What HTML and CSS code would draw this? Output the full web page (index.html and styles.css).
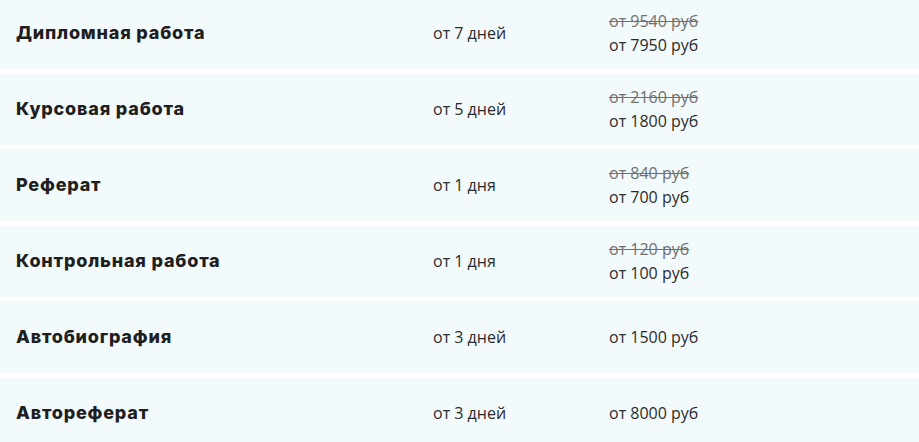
FILE: index.html
```html
<!DOCTYPE html>
<html lang="ru">
<head>
<meta charset="utf-8">
<link rel="stylesheet" href="styles.css">
</head>
<body>
<div class="table">
  <div class="row">
    <div class="name">Дипломная работа</div>
    <div class="term">от 7 дней</div>
    <div class="price"><span class="old">от 9540 руб</span><span>от 7950 руб</span></div>
  </div>
  <div class="row">
    <div class="name">Курсовая работа</div>
    <div class="term">от 5 дней</div>
    <div class="price"><span class="old">от 2160 руб</span><span>от 1800 руб</span></div>
  </div>
  <div class="row">
    <div class="name">Реферат</div>
    <div class="term">от 1 дня</div>
    <div class="price"><span class="old">от 840 руб</span><span>от 700 руб</span></div>
  </div>
  <div class="row">
    <div class="name">Контрольная работа</div>
    <div class="term">от 1 дня</div>
    <div class="price"><span class="old">от 120 руб</span><span>от 100 руб</span></div>
  </div>
  <div class="row">
    <div class="name">Автобиография</div>
    <div class="term">от 3 дней</div>
    <div class="price"><span>от 1500 руб</span></div>
  </div>
  <div class="row">
    <div class="name">Автореферат</div>
    <div class="term">от 3 дней</div>
    <div class="price"><span>от 8000 руб</span></div>
  </div>
</div>
</body>
</html>
```

FILE: styles.css
```css
html, body {
  margin: 0;
  padding: 0;
  background: #ffffff;
}
.table {
  display: flex;
  flex-direction: column;
  gap: 4px;
  margin-top: -3px;
}
.row {
  display: grid;
  grid-template-columns: 417px 176px 1fr;
  align-items: center;
  height: 72px;
  padding-left: 16px;
  background: #f3fafc;
  font-family: "Open Sans", "Liberation Sans", sans-serif;
  font-size: 16px;
  color: #2b2b2b;
}
.name {
  font-family: "Inter", "Liberation Sans", sans-serif;
  font-weight: 800;
  font-size: 18px;
  color: #1f1f1f;
  letter-spacing: 0.8px;
  padding-bottom: 2px;
}
.term {
  line-height: 24px;
}
.price {
  display: flex;
  flex-direction: column;
  line-height: 24px;
}
.old {
  color: #707070;
  text-decoration: line-through;
}
```
